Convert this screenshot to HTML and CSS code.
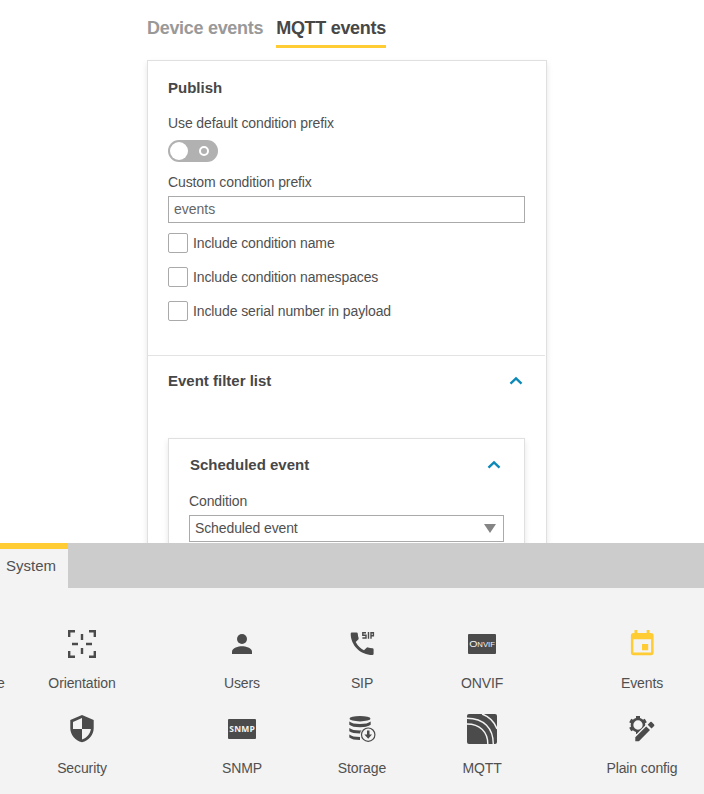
FILE: index.html
```html
<!DOCTYPE html>
<html lang="en">
<head>
<meta charset="utf-8">
<title>MQTT events</title>
<link rel="stylesheet" href="styles.css">
</head>
<body>
<main class="content">
  <nav class="tabs">
    <a class="tab">Device events</a>
    <a class="tab tab-active">MQTT events</a>
  </nav>
  <section class="card">
    <div class="publish">
      <h2 class="title">Publish</h2>
      <p class="label">Use default condition prefix</p>
      <div class="toggle"><span class="knob"></span><span class="ring"></span></div>
      <p class="label prefix-label">Custom condition prefix</p>
      <div class="field">events</div>
      <div class="checks">
        <label class="check"><span class="box"></span>Include condition name</label>
        <label class="check"><span class="box"></span>Include condition namespaces</label>
        <label class="check"><span class="box"></span>Include serial number in payload</label>
      </div>
    </div>
    <div class="filters">
      <div class="heading">
        <h2 class="title">Event filter list</h2>
        <svg class="chevron" viewBox="0 0 14 10"><path d="M1.500 7.700 7 2.500l5.500 5.200"/></svg>
      </div>
      <div class="event">
        <div class="heading">
          <h2 class="title">Scheduled event</h2>
          <svg class="chevron" viewBox="0 0 14 10"><path d="M1.500 7.700 7 2.500l5.500 5.200"/></svg>
        </div>
        <p class="label">Condition</p>
        <div class="field select">Scheduled event<span class="arrow"></span></div>
      </div>
    </div>
  </section>
</main>
<footer class="dock">
  <div class="dock-bar"><div class="dock-tab">System</div></div>
  <div class="grid">
    <div class="cut">e</div>
    <div class="item">
      <svg class="icon line" viewBox="0 0 30 30"><path d="M2.200 8V2.200H8M22 2.200h5.800V8M27.800 22v5.800H22M8 27.800H2.200V22M15 5v6M15 19v6M5 15h6M19 15h6"/></svg>
      <span>Orientation</span>
    </div>
    <div class="item col-users">
      <svg class="icon" viewBox="0 0 30 30"><circle cx="15" cy="10" r="5"/><path d="M5 25v-2.500C5 19 11.500 17.300 15 17.300S25 19 25 22.500V25z"/></svg>
      <span>Users</span>
    </div>
    <div class="item">
      <svg class="icon" viewBox="0 0 30 30"><path d="M4.900 3.500h4.600q1.200 0 1.300 1.200.1 2.300.8 4.300.3.800-.3 1.400l-2.600 2.600q2.900 5.500 8.300 8.300l2.600-2.600q.6-.6 1.400-.3 2 .7 4.400.8 1.200.1 1.200 1.300v4.300q0 1.200-1.200 1.200C13.600 26 3.700 16.400 3.700 4.700q0-1.200 1.200-1.200z"/><path class="sip" d="M19 3.700h-3.200v2.600H19V9h-3.600M21.500 3V9.700M24 9.700V3.700h2.400v3h-2.400"/></svg>
      <span>SIP</span>
    </div>
    <div class="item">
      <svg class="icon" viewBox="0 0 30 30"><rect x="1" y="5" width="28" height="20" rx="1"/><text class="onvif" x="2.200" y="18" textLength="25.800" lengthAdjust="spacingAndGlyphs"><tspan class="onvif-o">O</tspan>NVIF</text></svg>
      <span>ONVIF</span>
    </div>
    <div class="item col-events">
      <svg class="icon yellow" viewBox="0 0 30 30"><path fill-rule="evenodd" d="M7.500 1h2.800v3h9.400V1h2.800v3H24q2.600 0 2.600 2.600v16.900q0 2.700-2.600 2.700H6.500q-2.600 0-2.600-2.700V6.600Q3.900 4 6.500 4h1zM6.300 10.200v13.300h17.800V10.200zM15 15h6.200v6.200H15z"/></svg>
      <span>Events</span>
    </div>
    <div class="item col-security">
      <svg class="icon" viewBox="0 0 30 30"><path fill-rule="evenodd" d="M15 1 26.700 6v8.200C26.700 20.500 22 26.500 15 28.300 8 26.500 3.300 20.500 3.300 14.200V6zM15 4 6 8v7h9zM15 15v10.500c4.700-1.500 8.200-5.500 8.900-10.500z"/></svg>
      <span>Security</span>
    </div>
    <div class="item col-users">
      <svg class="icon" viewBox="0 0 30 30"><rect x="1" y="5" width="28" height="20" rx="1"/><text class="snmp" x="2.300" y="17.700" textLength="25.500" lengthAdjust="spacing">SNMP</text></svg>
      <span>SNMP</span>
    </div>
    <div class="item">
      <svg class="icon" viewBox="0 0 30 30"><ellipse cx="13" cy="4.700" rx="10.500" ry="2.700"/><path d="M2.300 7.500q3 2.500 10.700 2.500t10.700-2.500v3.300Q20.500 13.300 13 13.300T2.300 10.800zM2.300 14q3 2.500 10.700 2.500 7.700 0 10.700-2.500v3.300Q20.500 19.500 13 19.500T2.300 17.300zM2.300 20.500Q5.300 23 13 23v3q-7.700 0-10.700-2.500z"/><circle class="badge" cx="21.200" cy="20.700" r="8.200"/><circle class="badge-ring" cx="21.200" cy="20.700" r="6.700"/><path d="M20 16.500h2.500v4H25l-3.800 4.200-3.800-4.200H20z"/></svg>
      <span>Storage</span>
    </div>
    <div class="item">
      <svg class="icon" viewBox="0 0 30 30"><rect width="30" height="30" rx="2"/><g class="waves"><path d="M0 10C13 10 20.800 18 20.800 30M0 4.200C17 4.200 26.300 14.500 26.300 30M15 0C22 2.500 27.500 8 30 15"/></g></svg>
      <span>MQTT</span>
    </div>
    <div class="item col-events">
      <svg class="icon" viewBox="0 0 30 30"><circle class="gear-ring" cx="11" cy="11" r="6"/><path class="teeth" d="M11 2v3M11 17v3M3.200 6.500 5.800 8M16.200 8l2.600-1.500M3.200 15.500 5.800 14"/><path class="pencil" d="m7.200 22.500 12-12L24 15.300 12 28H7.200z"/><path d="m8.300 23.300 10.900-10.900 3.800 3.700-11.100 11.200H8.300zM20.700 10.800l2.600-2.700q.7-.6 1.400 0l2.400 2.500q.6.700 0 1.300L24.500 14.500z"/></svg>
      <span>Plain config</span>
    </div>
  </div>
</footer>
</body>
</html>
```

FILE: styles.css
```css
* { box-sizing: border-box; }
body {
  margin: 0;
  height: 794px;
  display: flex;
  flex-direction: column;
  overflow: hidden;
  background: #fff;
  color: #505050;
  font: 14px/20px "Liberation Sans", Arial, sans-serif;
  letter-spacing: -0.11px;
}
.content { height: 543px; padding: 15px 157px 0 147px; overflow: hidden; flex: none; }
.tabs { display: flex; gap: 13px; height: 33px; font-size: 18px; line-height: 26px; font-weight: bold; letter-spacing: -0.3px; }
.tab { color: #999; white-space: nowrap; }
.tab-active { color: #474747; border-bottom: 3px solid #ffcc33; }
.card { margin-top: 12px; height: 520px; border: 1px solid #e0e0e0; box-shadow: 0 3px 6px rgba(0, 0, 0, .1); }
.title { margin: 0; font-size: 15px; line-height: 20px; font-weight: bold; letter-spacing: 0; color: #474747; }
.label { margin: 0; }
.publish { height: 295px; margin-right: 1px; padding: 17px 20px 0 20px; border-bottom: 1px solid #e3e3e3; }
.publish .title { margin-bottom: 15px; }
.toggle { display: flex; align-items: center; justify-content: space-between; margin-top: 7px; width: 50px; height: 22px; padding: 0 9px 0 2px; border-radius: 11px; background: #b1b1b1; }
.knob { width: 18px; height: 18px; border-radius: 50%; background: #fff; }
.ring { width: 10px; height: 10px; border: 2px solid #fff; border-radius: 50%; }
.prefix-label { margin-top: 10px; }
.field { height: 27px; margin-top: 4px; padding: 0 5px; border: 1px solid #aaa; line-height: 25px; letter-spacing: 0; color: #666; }
.checks { display: flex; flex-direction: column; gap: 14px; margin-top: 10px; }
.check { display: flex; align-items: center; gap: 5px; height: 20px; }
.box { width: 20px; height: 20px; border: 1px solid #aaa; border-radius: 2px; }
.filters { padding: 15px 21px 0 20px; }
.heading { display: flex; justify-content: space-between; align-items: center; }
.chevron { width: 14px; height: 10px; margin-right: 2px; fill: none; stroke: #0c89b7; stroke-width: 2.4; }
.event { margin-top: 47px; height: 160px; padding: 16px 20px 0; border: 1px solid #e0e0e0; box-shadow: 0 3px 6px rgba(0, 0, 0, .1); }
.event .title { padding-left: 1px; }
.event .chevron { margin-right: 3px; }
.event .label { margin-top: 16px; }
.select { display: flex; align-items: center; justify-content: space-between; color: #505050; padding-right: 7px; letter-spacing: -0.11px; }
.arrow { border: 6.5px solid transparent; border-top: 9px solid #858585; border-bottom: 0; }
.dock { flex: none; height: 251px; background: #f3f3f3; }
.dock-bar { height: 45px; background: #ccc; }
.dock-tab { width: 68px; height: 45px; padding-left: 6px; border-top: 6px solid #ffcc33; background: #f3f3f3; font-size: 15px; line-height: 34px; letter-spacing: 0; }
.grid { display: grid; grid-template-columns: 22px 120px 40px 120px 120px 120px 40px 120px; grid-auto-rows: 85px; padding-top: 41px; }
.cut { padding-top: 44px; margin-left: -3px; }
.item { display: flex; flex-direction: column; align-items: center; gap: 14px; white-space: nowrap; }
.col-security { grid-column: 2; }
.col-users { grid-column: 4; }
.col-events { grid-column: 8; }
.icon { width: 30px; height: 30px; fill: #4b4b4b; letter-spacing: 0; }
.icon.yellow { fill: #ffcc33; }
.line { fill: none; stroke: #4b4b4b; stroke-width: 2.4; }
.sip { fill: none; stroke: #4b4b4b; stroke-width: 1.4; }
.onvif, .snmp { fill: #f3f3f3; font-family: "Liberation Sans", Arial, sans-serif; font-size: 7px; }
.onvif-o { font-size: 9.5px; }
.snmp { font-family: "Open Sans", sans-serif; font-size: 8.5px; font-weight: bold; }
.badge { fill: #f3f3f3; }
.badge-ring { fill: none; stroke: #4b4b4b; stroke-width: 1.2; }
.waves { fill: none; stroke: #f3f3f3; stroke-width: 1.4; }
.gear-ring { fill: none; stroke: #4b4b4b; stroke-width: 2.7; }
.teeth { fill: none; stroke: #4b4b4b; stroke-width: 4; }
.pencil { fill: #f3f3f3; }
```
